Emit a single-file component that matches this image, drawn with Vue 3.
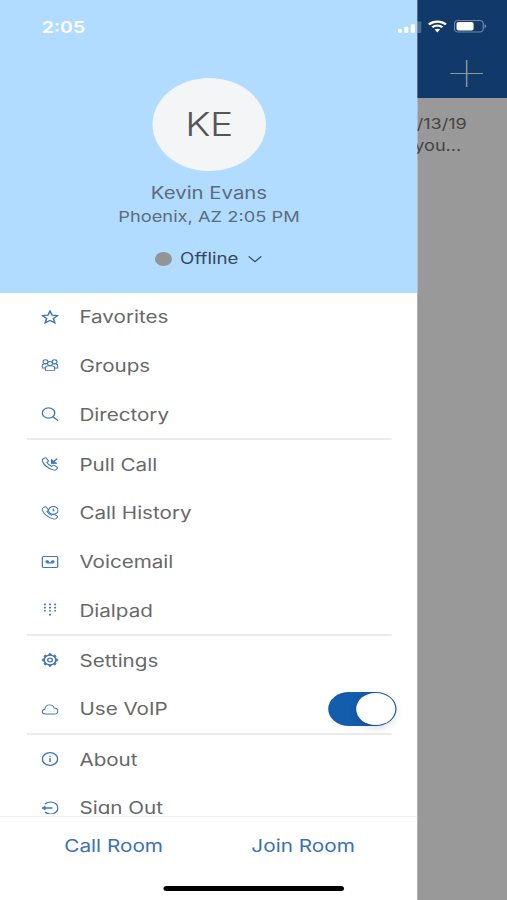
<script setup>
import { ref } from "vue";

const voip = ref(true);

const groups = [
  [
    { icon: "star", label: "Favorites" },
    { icon: "groups", label: "Groups" },
    { icon: "search", label: "Directory" }
  ],
  [
    { icon: "pull", label: "Pull Call" },
    { icon: "history", label: "Call History" },
    { icon: "voicemail", label: "Voicemail" },
    { icon: "dialpad", label: "Dialpad" }
  ],
  [
    { icon: "gear", label: "Settings" },
    { icon: "cloud", label: "Use VoIP", toggle: true }
  ],
  [
    { icon: "info", label: "About" },
    { icon: "signout", label: "Sign Out" }
  ]
];

const handset =
  "M1.2 2 2.700.9c.5-.3 1-.2 1.300.3l1.500 2.200c.3.5.2 1-.2 1.300l-.8.7c.6 1.600 2.100 3.100 3.800 3.900l.8-.8c.4-.4.9-.4 1.300-.1l2.200 1.500c.5.3.6.8.3 1.300l-.8 1.300c-.6.7-1.500.8-2.400.4C5.300 11.400 2.200 8.300.7 4.300.4 3.400.6 2.500 1.200 2Z";

const dots = [1.4, 4.6, 7.8].flatMap((y) => [2.8, 7, 11.2].map((x) => [x, y])).concat([[7, 11.6]]);

const teeth = [0, 45, 90, 135, 180, 225, 270, 315];
</script>

<template>
  <div class="screen">
    <div class="status">
      <span class="clock">2:05</span>
      <svg class="signal" viewBox="0 0 20 12" width="20" height="12">
        <rect x="0" y="8" width="3.4" height="4" rx="0.9" />
        <rect x="5.3" y="5.8" width="3.4" height="6.2" rx="0.9" />
        <rect x="10.6" y="3.2" width="3.4" height="8.8" rx="0.9" />
        <rect x="15.9" y="0.5" width="3.4" height="11.5" rx="0.9" opacity="0.25" />
      </svg>
      <svg class="wifi" viewBox="0 0 17 12.5" width="17" height="13">
        <path d="M8.5 2.5c2.4 0 4.600.9 6.200 2.500l1.500-1.600A11 11 0 0 0 8.500.3 11 11 0 0 0 .8 3.400L2.300 5a8.900 8.900 0 0 1 6.200-2.500Z" />
        <path d="M8.500 6.400c1.300 0 2.500.5 3.400 1.300l1.500-1.500a7.200 7.200 0 0 0-9.800 0l1.500 1.500c.9-.8 2.100-1.300 3.400-1.300Z" />
        <path d="M8.500 8.500c-.9 0-1.600.3-2.200.8l2.200 2.900 2.200-2.900c-.6-.5-1.300-.8-2.200-.8Z" />
      </svg>
      <svg class="battery" viewBox="0 0 27 12.5" width="27" height="12.5">
        <rect x="0.5" y="0.5" width="23.6" height="11.5" rx="3" fill="none" stroke="#fff" stroke-opacity="0.4" />
        <rect x="2.2" y="2.1" width="14" height="8.4" rx="1.7" />
        <path d="M25.2 4.200c.9.4 1.400 1.100 1.400 2s-.5 1.700-1.400 2.100Z" opacity="0.4" />
      </svg>
    </div>

    <aside class="drawer">
      <header class="profile">
        <div class="avatar">KE</div>
        <div class="name">Kevin Evans</div>
        <div class="place">Phoenix, AZ 2:05 PM</div>
        <div class="presence">
          <i class="presence-dot"></i>
          <span>Offline</span>
          <svg viewBox="0 0 12 8" width="12" height="8">
            <path d="M.8 1.300 6 6.600l5.200-5.300" fill="none" stroke="#37506a" stroke-width="1.2" />
          </svg>
        </div>
      </header>

      <nav class="menu">
        <div v-for="(group, idx) in groups" :key="idx" class="group">
          <div v-for="item in group" :key="item.label" class="row">
            <svg class="icon" viewBox="0 0 14 14" width="14" height="14">
              <path
                v-if="item.icon === 'star'"
                d="m7 1 1.700 4.200 4.600.3-3.500 2.900 1.100 4.400L7 10.400l-3.900 2.400 1.100-4.400L.7 5.500l4.600-.3Z"
                stroke-width="1.3"
              />
              <g v-else-if="item.icon === 'groups'">
                <circle cx="3.3" cy="3.7" r="2" />
                <circle cx="10.7" cy="3.7" r="2" />
                <circle cx="7" cy="5.6" r="2.1" />
                <path d="M3.200 12.400v-2.200c0-1.400.9-2.300 2.300-2.300h3c1.400 0 2.300.9 2.300 2.300v2.200Z" />
                <path d="M3.200 10H.6V7.800c0-1.200.8-2.100 2-2.100h1.800M10.800 10h2.600V7.800c0-1.200-.8-2.100-2-2.100H9.600" />
              </g>
              <g v-else-if="item.icon === 'search'" stroke-width="1.2">
                <circle cx="5.8" cy="6" r="5.1" />
                <path d="m9.500 9.800 4.100 3.900" />
              </g>
              <g v-else-if="item.icon === 'pull'" stroke-width="1">
                <path :d="handset" />
                <path d="M12.900 1.800 8.500 5.800M8.300 2.600v3.500h4.200" stroke-width="1.2" />
                <path d="m8.300 3 3.300 3.100H8.300Z" fill="#3f76bd" />
              </g>
              <g v-else-if="item.icon === 'history'">
                <path :d="handset" />
                <circle cx="9.7" cy="4.4" r="3.9" />
                <path d="M9.600 2.400v2.300h1.100" />
              </g>
              <g v-else-if="item.icon === 'voicemail'">
                <rect x="0.6" y="1.5" width="12.8" height="11" rx="1.2" stroke-width="1.2" />
                <circle cx="4.7" cy="6.7" r="1" fill="#3f76bd" />
                <circle cx="9.3" cy="6.7" r="1" fill="#3f76bd" />
                <path d="M4.700 7.900h4.600" stroke-width="1.1" />
              </g>
              <g v-else-if="item.icon === 'dialpad'" class="solid">
                <rect v-for="(d, n) in dots" :key="n" :x="d[0] - 0.8" :y="d[1] - 0.8" width="1.6" height="1.6" rx="0.5" />
              </g>
              <g v-else-if="item.icon === 'gear'">
                <circle cx="7" cy="7" r="4.8" stroke-width="1.3" />
                <circle cx="7" cy="7" r="1.9" stroke-width="1.2" />
                <path v-for="t in teeth" :key="t" d="M5.800 2.200 6.200.6h1.600l.4 1.600Z" fill="#3f76bd" stroke-width="0.5" :transform="`rotate(${t} 7 7)`" />
              </g>
              <path
                v-else-if="item.icon === 'cloud'"
                d="M3.300 12C1.700 12 .6 11 .6 9.600c0-1.300 1-2.200 2.200-2.400C3 4.700 4.600 2.900 6.700 2.900c1.900 0 3.200 1.200 3.700 3.100 1.800.1 3 1.400 3 3 0 1.700-1.300 3-3 3Z"
              />
              <g v-else-if="item.icon === 'info'">
                <circle cx="7" cy="7" r="6.3" stroke-width="1.2" />
                <path d="M7 6v4M7 3.800v1.300" stroke-width="1.2" />
              </g>
              <g v-else>
                <path d="M3 3a6 6 0 1 1 0 8" stroke-width="1.2" />
                <path d="M1 7h8" stroke-width="1.3" />
                <path d="M.4 7 3 4.900v4.200Z" fill="#3f76bd" stroke-width="0.5" />
              </g>
            </svg>
            <span class="label">{{ item.label }}</span>
            <button v-if="item.toggle" type="button" class="switch" :class="{ on: voip }" @click="voip = !voip">
              <i class="knob"></i>
            </button>
          </div>
        </div>
      </nav>

      <footer class="footer">
        <a class="room">Call Room</a>
        <a class="room">Join Room</a>
      </footer>
    </aside>

    <main class="behind">
      <div class="navbar">
        <svg viewBox="0 0 27 27" width="27" height="27">
          <path d="M0 13.500h27M13.500 0v27" stroke="#8f969b" stroke-width="1.2" />
        </svg>
      </div>
      <div class="preview">
        <div>/13/19</div>
        <div class="snippet">you...</div>
      </div>
    </main>

    <div class="home"></div>
  </div>
</template>

<style>
body {
  margin: 0;
  overflow: hidden;
}
</style>

<style scoped>
/* laid out at phone proportions, then widened to fill the window */
.screen {
  position: relative;
  display: flex;
  width: 415.57px;
  height: 900px;
  overflow: hidden;
  transform: scaleX(1.22);
  transform-origin: 0 0;
  background: #999;
  font-family: Inter, "Liberation Sans", sans-serif;
  color: #686868;
}

.status {
  position: absolute;
  inset: 0 0 auto;
  z-index: 2;
  display: flex;
  align-items: center;
  height: 53px;
  padding: 0 16.3px 0 34.2px;
  box-sizing: border-box;
  color: #fff;
  fill: #fff;
}

.clock {
  font-size: 16px;
  font-weight: 600;
}

.signal {
  margin-left: auto;
}

.wifi {
  margin: 0 5.5px 0 4px;
}

.drawer {
  display: flex;
  flex-direction: column;
  flex: none;
  width: 341.6px;
  background: #fff;
}

.profile {
  display: flex;
  flex-direction: column;
  align-items: center;
  flex: none;
  height: 292.5px;
  padding: 77.5px 0 0 1px;
  box-sizing: border-box;
  background: #b1dcff;
  color: #5b6c7b;
}

.avatar {
  width: 93px;
  height: 93px;
  border-radius: 50%;
  background: #f3f5f7;
  color: #555;
  font-size: 32px;
  font-weight: 300;
  line-height: 94px;
  letter-spacing: -0.5px;
  text-align: center;
}

.name {
  margin-top: 10px;
  font-size: 16.7px;
  line-height: 24px;
}

.place {
  font-size: 15px;
  line-height: 24px;
}

.presence {
  display: flex;
  align-items: center;
  margin-top: 18px;
  font-size: 15.3px;
  line-height: 24px;
  color: #33485c;
}

.presence-dot {
  width: 14px;
  height: 14px;
  margin-right: 6.5px;
  border-radius: 50%;
  background: #929596;
}

.presence svg {
  margin-left: 8px;
}

.menu {
  height: 521.5px;
  overflow: hidden;
}

.group + .group::before {
  content: "";
  display: block;
  width: 299px;
  height: 1.5px;
  margin-left: 22px;
  background: #ebebec;
}

.row {
  display: flex;
  align-items: center;
  height: 48.65px;
  padding: 0 16.4px 0 33.6px;
}

.icon {
  flex: none;
  margin-right: 17.5px;
  fill: none;
  stroke: #3f76bd;
  stroke-width: 0.9;
}

.icon .solid {
  fill: #3f76bd;
  stroke: none;
}

.label {
  padding-top: 1px;
  font-size: 16.9px;
}

.switch {
  width: 56.5px;
  height: 34.5px;
  margin-left: auto;
  padding: 1.5px;
  border: 0;
  border-radius: 18px;
  background: #ccc;
}

.switch.on {
  background: #145dac;
}

.knob {
  display: block;
  width: 31.5px;
  height: 31.5px;
  border-radius: 50%;
  background: #fff;
  box-shadow: 0 3px 8px rgba(0, 0, 0, 0.15);
}

.switch.on .knob {
  margin-left: auto;
}

.footer {
  display: flex;
  flex: 1;
  margin-top: 1.5px;
  border-top: 1px solid #f0f0f0;
  padding: 0 15.5px;
}

.room {
  flex: 1;
  padding-top: 17px;
  font-size: 17px;
  line-height: 24px;
  text-align: center;
  color: #3b71b5;
}

.behind {
  flex: 1;
  overflow: hidden;
}

.navbar {
  display: flex;
  height: 98px;
  padding: 60px 0 0 27px;
  box-sizing: border-box;
  background: #113a6b;
}

.preview {
  padding-top: 15px;
  font-size: 14.8px;
  line-height: 22px;
  color: #444;
}

.snippet {
  margin-left: -2px;
}

.home {
  position: absolute;
  bottom: 9px;
  left: 134.4px;
  width: 147.6px;
  height: 5.5px;
  border-radius: 3px;
  background: #000;
}
</style>
